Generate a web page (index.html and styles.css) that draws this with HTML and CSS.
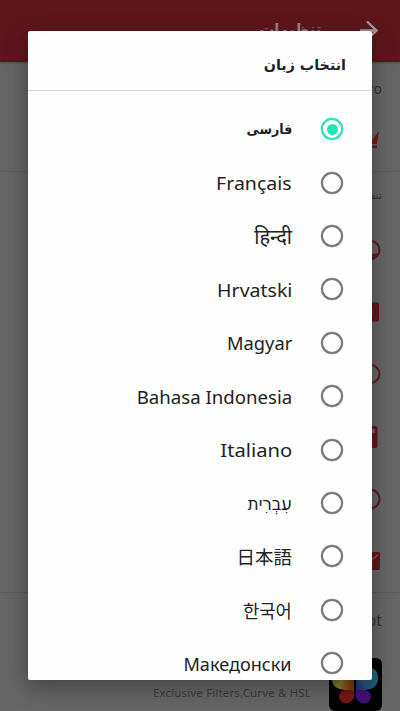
FILE: index.html
```html
<!DOCTYPE html>
<html lang="fa" dir="rtl">
<head>
<meta charset="utf-8">
<title>انتخاب زبان</title>
<link rel="stylesheet" href="styles.css">
</head>
<body>
<div class="page">
  <header class="bar">
    <svg class="arrow" viewBox="0 0 20 20"><path d="M1 10.500H17M8 1.500L17.500 10.500L8 19.500"/></svg>
    <span class="bar-title">تنظیمات</span>
  </header>
  <section class="group pro">
    <div class="label" dir="ltr">Pro</div>
    <div class="row"><svg class="ico crown" viewBox="0 0 24 24"><path d="M3 5L7 11L12 3L14 13L21 4L19 17H3zM3 18.500H19V21H3z"/></svg></div>
  </section>
  <section class="group settings">
    <div class="label small">تنظیمات</div>
    <div class="row"><svg class="ico line" viewBox="0 0 24 24"><circle cx="12.500" cy="12" r="9"/><path d="M12 17L18 16.500L15.500 20.500z"/></svg></div>
    <div class="row"><svg class="ico" viewBox="0 0 24 24"><rect x="2" y="2.500" width="19" height="19" rx="2"/><path class="cut" d="M13 12l2-1.500v3z"/></svg></div>
    <div class="row"><svg class="ico line" viewBox="0 0 24 24"><circle cx="12.500" cy="12" r="9"/></svg></div>
    <div class="row"><svg class="ico" viewBox="0 0 24 24"><rect x="4" y="1" width="15.500" height="22" rx="2"/><path class="cut" d="M14 4h3v4h-3z"/></svg></div>
    <div class="row"><svg class="ico line" viewBox="0 0 24 24"><circle cx="12" cy="12" r="9.500"/><path d="M13 10.500V8.500"/></svg></div>
    <div class="row"><svg class="ico" viewBox="0 0 24 24"><rect x="2" y="3" width="20" height="18" rx="2"/><path class="fold" d="M4 6L12 12L20 6"/></svg></div>
  </section>
  <section class="group promo">
    <div class="label" dir="ltr">Hot</div>
    <div class="app">
      <svg class="logo" viewBox="0 0 53 53">
        <defs>
          <linearGradient id="warm" x1="0" y1="0" x2="1" y2=".3"><stop offset="0" stop-color="#506a18"/><stop offset=".5" stop-color="#8c7b31"/><stop offset="1" stop-color="#813710"/></linearGradient>
          <linearGradient id="cool" x1="1" y1="0" x2="0" y2="1"><stop offset="0" stop-color="#1c6b70"/><stop offset=".6" stop-color="#22577a"/><stop offset="1" stop-color="#2a2470"/></linearGradient>
        </defs>
        <rect width="53" height="53" rx="6" fill="#030303"/>
        <path d="M25 36V21C25 12 16 8 9 10C1 13 1 26 8 30C13 32 19 32 25 36z" fill="url(#warm)"/>
        <path d="M27 36V21C27 12 36 8 43 10C51 13 51 26 44 30C39 32 33 32 27 36z" fill="url(#cool)"/>
        <path d="M25 38V33C18 31 10 32 10 38C10 48 25 47 25 38z" fill="#791515"/>
        <path d="M27 38V33C34 31 42 32 42 38C42 48 27 47 27 38z" fill="#421276"/>
      </svg>
      <span class="desc" dir="ltr">Exclusive Filters,Curve &amp; HSL</span>
    </div>
  </section>
</div>

<div class="dialog" role="dialog">
  <h1 class="title"><span>انتخاب زبان</span></h1>
  <ul class="list">
    <li class="item"><i class="radio on"></i><span class="name fa">فارسی</span></li>
    <li class="item"><i class="radio"></i><span class="name fr" dir="ltr">Français</span></li>
    <li class="item"><i class="radio"></i><span class="name hi" dir="ltr">हिन्दी</span></li>
    <li class="item"><i class="radio"></i><span class="name hr" dir="ltr">Hrvatski</span></li>
    <li class="item"><i class="radio"></i><span class="name hu" dir="ltr">Magyar</span></li>
    <li class="item"><i class="radio"></i><span class="name id" dir="ltr">Bahasa Indonesia</span></li>
    <li class="item"><i class="radio"></i><span class="name it" dir="ltr">Italiano</span></li>
    <li class="item"><i class="radio"></i><span class="name he">עִבְרִית</span></li>
    <li class="item"><i class="radio"></i><span class="name ja" dir="ltr">日本語</span></li>
    <li class="item"><i class="radio"></i><span class="name ko" dir="ltr">한국어</span></li>
    <li class="item"><i class="radio"></i><span class="name mk" dir="ltr">Македонски</span></li>
  </ul>
</div>
</body>
</html>
```
FILE: styles.css
```css
* { box-sizing: border-box; }
body {
  margin: 0;
  height: 711px;
  overflow: hidden;
  background: #666;
  font-family: "Noto Sans", "DejaVu Sans", "Noto Sans CJK JP", sans-serif;
}
.page { height: 711px; overflow: hidden; }
.bar {
  height: 62px;
  padding: 20px 21px 0 0;
  display: flex;
  align-items: flex-start;
  gap: 38px;
  background: #5e161c;
  box-shadow: 0 1px 2px rgba(0, 0, 0, .3);
  color: #8e8588;
}
.arrow { width: 20px; height: 20px; fill: none; stroke: #a39698; stroke-width: 2.4; }
.bar-title {
  font: 700 16px/20px "DejaVu Sans", sans-serif;
  transform: scaleX(.92);
  transform-origin: right center;
}
.group { padding-right: 18px; border-bottom: 1px solid #5b5b5b; }
.pro { height: 110px; padding-top: 16px; }
.settings { height: 421px; padding-top: 14px; }
.promo { padding-top: 16px; border: 0; }
.label { height: 22px; font-size: 14px; line-height: 22px; color: #343434; text-align: right; }
.small { font: 11px/20px "DejaVu Sans", sans-serif; height: 33px; }
.row { height: 62.2px; display: flex; align-items: center; }
.pro .row { height: 78px; }
.promo .label { font-size: 16px; }
.ico { width: 24px; height: 24px; fill: #65151d; }
.crown { fill: #7a1824; }
.line { fill: none; stroke: #65151d; stroke-width: 2; }
.cut { fill: #756064; }
.fold { fill: none; stroke: #756064; stroke-width: 1.5; }
.app { display: flex; align-items: center; gap: 18px; margin-top: 27px; }
.logo { width: 53px; height: 53px; }
.desc { padding-top: 16px; font-size: 11.5px; line-height: 16px; letter-spacing: .15px; color: #3c3c3c; }

.dialog {
  position: absolute;
  left: 28px;
  top: 31px;
  width: 344px;
  height: 649px;
  overflow: hidden;
  border-radius: 2px;
  background: #fefefe;
  box-shadow: 0 7px 22px rgba(0, 0, 0, .36);
  color: #222;
}
.title {
  margin: 0;
  height: 60px;
  padding: 23px 26px 0 0;
  border-bottom: 1px solid #d6d6d6;
  font: 700 14.3px/22px "DejaVu Sans", sans-serif;
}
.title span, .name { display: inline-block; transform-origin: right center; }
.list { margin: 0; padding: 11.500px 0 0; list-style: none; }
.item {
  height: 53.4px;
  padding-right: 29px;
  display: flex;
  align-items: center;
  gap: 29px;
}
.radio {
  flex: none;
  width: 22px;
  height: 22px;
  display: grid;
  place-items: center;
  border: 2px solid #777;
  border-radius: 50%;
  box-shadow: 0 0 0 .2px #777;
}
.on { border-color: #30dfb5; box-shadow: 0 0 0 .2px #30dfb5; }
.on::after { content: ""; width: 11px; height: 11px; border-radius: 50%; background: #1de9b6; }
.name { font-size: 18px; line-height: 28px; padding-top: 1px; white-space: nowrap; }
.fa { font: 700 14px/24px "DejaVu Sans", sans-serif; padding: 0; transform: scaleX(.91); }
.fr { transform: scaleX(1.085); }
.hi { font-size: 20px; padding-top: 2px; }
.hr { transform: scaleX(1.085); }
.hu { transform: scaleX(1.015); }
.id { transform: scaleX(1.035); }
.it { transform: scaleX(1.12); }
.he { transform: scaleX(.92); padding: 0; }
.ja { font-family: "Noto Sans CJK JP", sans-serif; font-size: 18.5px; padding: 0; }
.ko { font-family: "Noto Sans CJK KR", sans-serif; padding: 0; transform: scaleX(.98); }
.mk { transform: scaleX(1.005); }
```
